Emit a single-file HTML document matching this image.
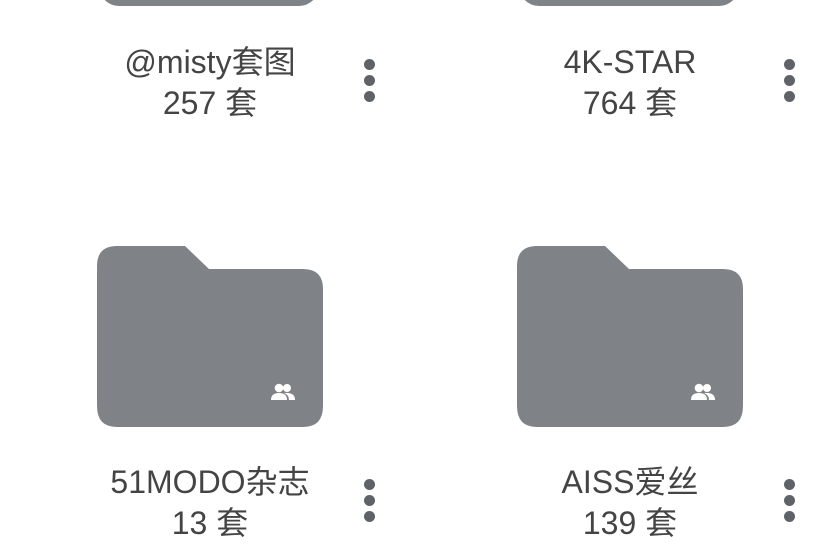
<!DOCTYPE html>
<html><head><meta charset="utf-8"><style>
body{margin:0;width:840px;height:560px;background:#fff;overflow:hidden;position:relative;font-family:"Liberation Sans","Noto Sans CJK SC",sans-serif;color:#444}
.t{position:absolute;width:300px;text-align:center;font-size:32px;line-height:41px}
.d{position:absolute;width:11px}
.d i{display:block;width:11px;height:11px;border-radius:50%;background:#5f6368;margin-bottom:5px}
svg{position:absolute}
</style></head><body>
<svg width="840" height="560" style="left:0;top:0">
<defs>
<g id="f">
<path d="M0 20 Q0 0 20 0 L88 0 L112 23 L206 23 Q226 23 226 43 L226 160 Q226 181 206 181 L20 181 Q0 181 0 160 Z" fill="#7f8388"/>
<g fill="#fff" transform="translate(174,137)">
<circle cx="8" cy="5" r="4.3"/><path d="M0 17 Q0 10 8 10 Q16 10 16 17 Z"/>
<circle cx="16" cy="5" r="4" /><path d="M13 10 Q24 9 24 17 L18 17 Q18 12 13 10 Z"/>
</g>
</g>
</defs>
<rect x="99" y="-40" width="220" height="46" rx="20" fill="#7f8388"/>
<rect x="519" y="-40" width="220" height="46" rx="20" fill="#7f8388"/>
<use href="#f" x="97" y="246"/>
<use href="#f" x="517" y="246"/>
</svg>
<div class="t" style="left:60px;top:42px">@misty套图<br>257 套</div>
<div class="t" style="left:480px;top:42px">4K-STAR<br>764 套</div>
<div class="t" style="left:60px;top:462px">51MODO杂志<br>13 套</div>
<div class="t" style="left:480px;top:462px">AISS爱丝<br>139 套</div>
<div class="d" style="left:364px;top:59px"><i></i><i></i><i></i></div>
<div class="d" style="left:784px;top:59px"><i></i><i></i><i></i></div>
<div class="d" style="left:364px;top:479px"><i></i><i></i><i></i></div>
<div class="d" style="left:784px;top:479px"><i></i><i></i><i></i></div>
</body></html>
